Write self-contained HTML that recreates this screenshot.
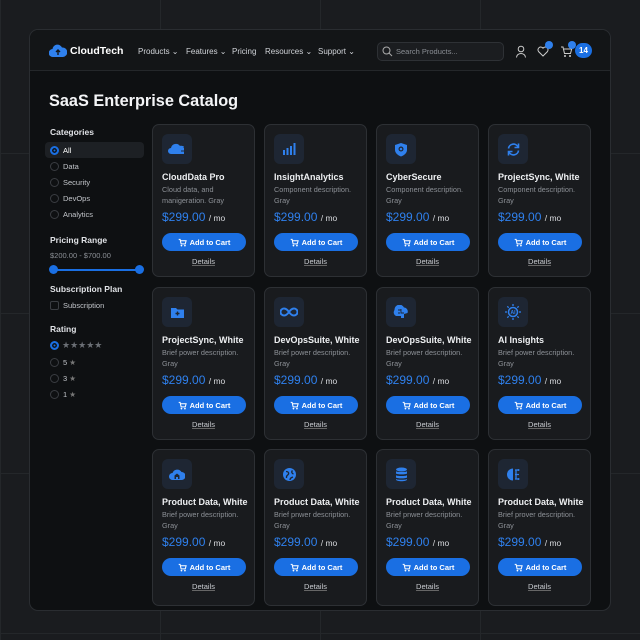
<!DOCTYPE html>
<html><head><meta charset="utf-8"><style>
*{margin:0;padding:0;box-sizing:border-box}
body{width:640px;height:640px;overflow:hidden;background:#1a1c1f;font-family:"Liberation Sans",sans-serif;color:#e8eaed;position:relative;
background-image:linear-gradient(#24272a 1px,transparent 1px),linear-gradient(90deg,#24272a 1px,transparent 1px);background-size:160px 160px;background-position:0 -7px}
.win{position:absolute;left:29px;top:29px;width:582px;height:582px;background:#0e1012;border:1px solid #2a2d31;border-radius:9px;overflow:hidden}
.hdr{position:absolute;left:0;top:0;width:100%;height:41px;background:#131517;border-bottom:1px solid #24272a}
.abs{position:absolute}
.nav{font-size:8px;color:#d0d3d8;top:17px}
.card{position:absolute;width:103px;background:#191b1e;border:1px solid #2d3034;border-radius:7px}
.ic{position:absolute;left:9px;top:9px;width:30px;height:30px;border-radius:6px;background:#1e2633;display:flex;align-items:center;justify-content:center}
.t{position:absolute;left:9px;top:47px;font-size:9px;font-weight:bold;color:#eef0f2;white-space:nowrap}
.d{position:absolute;left:9px;top:60px;font-size:7.3px;line-height:10.5px;color:#8c9096;width:90px}
.p{position:absolute;left:9px;top:85px;font-size:12px;color:#2f80ed;white-space:nowrap}
.p span{font-size:8.5px;color:#d8dade}
.b{position:absolute;left:9px;top:108px;width:84px;height:18px;border-radius:9px;background:#1a6fe3;color:#fff;font-size:7.5px;font-weight:bold;display:flex;align-items:center;justify-content:center;gap:3px}
.dt{position:absolute;left:0;width:100%;text-align:center;top:132px;font-size:7.5px;color:#c9ccd1;text-decoration:underline;text-decoration-color:#666}
.sb{position:absolute;font-size:8px;color:#e0e2e6}
.lbl{font-weight:bold;font-size:8.5px}
.rad{position:absolute;width:9px;height:9px;border-radius:50%;border:1px solid #3a3d42}
.it{position:absolute;font-size:7.5px;color:#c2c5ca}
</style></head><body>
<div class="win">
 <div class="hdr">
  <svg class="abs" style="left:19px;top:14px" width="18" height="14" viewBox="0 0 18 14"><path d="M4 13a4 4 0 0 1-.5-8A5 5 0 0 1 13 3.5 4.5 4.5 0 0 1 14 13z" fill="#2f80ed"/><path d="M9 11V6M7 8l2-2 2 2" stroke="#131517" stroke-width="1.4" fill="none"/></svg>
  <div class="abs" style="left:40px;top:15px;font-size:10.5px;font-weight:bold;color:#fff">CloudTech</div>
  <div class="abs nav" style="left:108px">Products ⌄</div>
  <div class="abs nav" style="left:156px">Features ⌄</div>
  <div class="abs nav" style="left:202px">Pricing</div>
  <div class="abs nav" style="left:235px">Resources ⌄</div>
  <div class="abs nav" style="left:288px">Support ⌄</div>
  <div class="abs" style="left:347px;top:12px;width:127px;height:19px;border:1px solid #2e3135;border-radius:5px;background:#1b1d20"></div>
  <svg class="abs" style="left:352px;top:16px" width="11" height="11" viewBox="0 0 11 11"><circle cx="4.5" cy="4.5" r="3.5" stroke="#aaa" fill="none"/><path d="M7 7l3 3" stroke="#aaa"/></svg>
  <div class="abs" style="left:366px;top:17px;font-size:7.5px;color:#8a8e94">Search Products...</div>
  <svg class="abs" style="left:485px;top:15px" width="12" height="13" viewBox="0 0 12 13"><circle cx="6" cy="4" r="2.8" stroke="#ccc" fill="none"/><path d="M1.5 12.5a4.5 4 0 0 1 9 0" stroke="#ccc" fill="none"/></svg>
  <svg class="abs" style="left:507px;top:16px" width="12" height="11" viewBox="0 0 12 11"><path d="M6 10L1.5 5.5A2.6 2.6 0 0 1 6 2.2 2.6 2.6 0 0 1 10.5 5.5z" stroke="#ccc" fill="none"/></svg>
  <div class="abs" style="left:515px;top:11px;width:8px;height:8px;border-radius:50%;background:#2f80ed"></div>
  <svg class="abs" style="left:530px;top:15px" width="13" height="13" viewBox="0 0 13 13"><path d="M1 2h2l1.5 6.5h6l1.2-4.5H4" stroke="#ccc" fill="none"/><circle cx="5" cy="11" r="1" fill="#ccc"/><circle cx="10" cy="11" r="1" fill="#ccc"/></svg>
  <div class="abs" style="left:538px;top:11px;width:8px;height:8px;border-radius:50%;background:#2f80ed"></div>
  <div class="abs" style="left:545px;top:13px;width:17px;height:15px;border-radius:8px;background:#1a6fe3;font-size:8px;font-weight:bold;color:#fff;text-align:center;line-height:15px">14</div>
 </div>
 <div class="abs" style="left:19px;top:62px;font-size:16.3px;font-weight:bold;color:#f4f5f7">SaaS Enterprise Catalog</div>
 <div class="sb lbl" style="left:20px;top:97px">Categories</div>
 <div class="abs" style="left:15px;top:112px;width:99px;height:16px;border-radius:4px;background:#1d2024"></div>
 <div class="rad" style="left:20px;top:116px;border:2px solid #1a6fe3;background:#1a6fe3;box-shadow:inset 0 0 0 1.5px #0e1012"></div><div class="it" style="left:33px;top:116px;color:#fff">All</div>
 <div class="rad" style="left:20px;top:132px"></div><div class="it" style="left:33px;top:132px">Data</div>
 <div class="rad" style="left:20px;top:148px"></div><div class="it" style="left:33px;top:148px">Security</div>
 <div class="rad" style="left:20px;top:164px"></div><div class="it" style="left:33px;top:164px">DevOps</div>
 <div class="rad" style="left:20px;top:180px"></div><div class="it" style="left:33px;top:180px">Analytics</div>
 <div class="sb lbl" style="left:20px;top:205px">Pricing Range</div>
 <div class="it" style="left:20px;top:221px;color:#8c9096">$200.00 - $700.00</div>
 <div class="abs" style="left:24px;top:239px;width:86px;height:2px;background:#1a6fe3"></div>
 <div class="abs" style="left:19px;top:235px;width:9px;height:9px;border-radius:50%;background:#1a6fe3"></div>
 <div class="abs" style="left:105px;top:235px;width:9px;height:9px;border-radius:50%;background:#1a6fe3"></div>
 <div class="sb lbl" style="left:20px;top:254px">Subscription Plan</div>
 <div class="abs" style="left:20px;top:271px;width:9px;height:9px;border:1px solid #3a3d42;border-radius:2px"></div><div class="it" style="left:33px;top:271px">Subscription</div>
 <div class="sb lbl" style="left:20px;top:294px">Rating</div>
 <div class="rad" style="left:20px;top:311px;border:2px solid #1a6fe3;background:#1a6fe3;box-shadow:inset 0 0 0 1.5px #0e1012"></div><div class="it" style="left:32px;top:310px;color:#6b6f75;font-size:9px">★★★★★</div>
 <div class="rad" style="left:20px;top:328px"></div><div class="it" style="left:33px;top:328px">5 <span style="color:#777">★</span></div>
 <div class="rad" style="left:20px;top:344px"></div><div class="it" style="left:33px;top:344px">3 <span style="color:#777">★</span></div>
 <div class="rad" style="left:20px;top:360px"></div><div class="it" style="left:33px;top:360px">1 <span style="color:#777">★</span></div>
 <div id="grid"></div>
</div>
<script>
var B='#2f80ed';
var icons=[
'<svg width="18" height="14" viewBox="0 0 18 14"><path d="M3 12a3 3 0 0 1 0-6 5 5 0 0 1 9-2h1v8z" fill="'+B+'"/><ellipse cx="13" cy="5" rx="3" ry="1.3" fill="'+B+'"/><rect x="10" y="6" width="6" height="2.5" fill="'+B+'"/><rect x="10" y="9.5" width="6" height="2.5" fill="'+B+'"/></svg>',
'<svg width="14" height="14" viewBox="0 0 14 14"><rect x="1" y="8" width="2" height="5" fill="'+B+'"/><rect x="4.5" y="6" width="2" height="7" fill="'+B+'"/><rect x="8" y="4" width="2" height="9" fill="'+B+'"/><rect x="11.5" y="1" width="2" height="12" fill="'+B+'"/></svg>',
'<svg width="14" height="15" viewBox="0 0 14 15"><path d="M7 1l6 2v5c0 3-3 5.5-6 6.5C4 13.5 1 11 1 8V3z" fill="'+B+'"/><circle cx="7" cy="7" r="2.5" fill="#1e2633"/><circle cx="7" cy="7" r="1.3" fill="'+B+'"/></svg>',
'<svg width="15" height="15" viewBox="0 0 15 15"><path d="M2.5 6.5A5 5 0 0 1 12 5M12.5 8.5A5 5 0 0 1 3 10" stroke="'+B+'" stroke-width="1.6" fill="none"/><path d="M12.5 1.5V5.5H8.5M2.5 13.5V9.5H6.5" stroke="'+B+'" stroke-width="1.6" fill="none"/></svg>',
'<svg width="15" height="13" viewBox="0 0 15 13"><path d="M1 2h5l1.5 1.5H14V12H1z" fill="'+B+'"/><path d="M7.5 5.5v4M5.5 7.5h4" stroke="#1e2633" stroke-width="1.4"/></svg>',
'<svg width="18" height="10" viewBox="0 0 18 10"><path d="M9 5C7 2 5 1.5 4 1.5a3.5 3.5 0 0 0 0 7C5 8.5 7 8 9 5s4-3.5 5-3.5a3.5 3.5 0 0 1 0 7c-1 0-3-.5-5-3.5" stroke="'+B+'" stroke-width="2" fill="none"/></svg>',
'<svg width="16" height="15" viewBox="0 0 16 15"><path d="M3 11a4 4 0 0 1-1.5-6A5 5 0 0 1 11 2.5 4 4 0 0 1 14.5 8L11 9v4H8v-2H4z" fill="'+B+'"/><path d="M5 5h3M8 4v4h3M5 8h2" stroke="#1e2633" stroke-width=".9" fill="none"/></svg>',
'<svg width="18" height="18" viewBox="0 0 18 18"><circle cx="9" cy="9" r="4.5" fill="none" stroke="'+B+'" stroke-width="1.5"/><text x="9" y="11" font-size="5" font-weight="bold" text-anchor="middle" fill="'+B+'" font-family="Liberation Sans">AI</text><path d="M9 1v2M9 15v2M1 9h2M15 9h2M3.3 3.3l1.4 1.4M13.3 13.3l1.4 1.4M3.3 14.7l1.4-1.4M13.3 4.7l1.4-1.4" stroke="'+B+'" stroke-width="1.3"/></svg>',
'<svg width="16" height="14" viewBox="0 0 16 14"><path d="M3.5 13a3.5 3.5 0 0 1 0-7A5 5 0 0 1 12.5 5a4 4 0 0 1 0 8z" fill="'+B+'"/><path d="M5.5 12V8.5L8 6.5l2.5 2V12H9V10H7v2z" fill="#1e2633"/></svg>',
'<svg width="15" height="15" viewBox="0 0 15 15"><circle cx="7.5" cy="7.5" r="6.5" fill="'+B+'"/><path d="M4 4.5c2 0 3 1 2.5 2.5S4 8 4.5 11M10.5 3.5C9 5 10 6.5 11.5 7M8 13c0-2 1.5-2.5 3-3" stroke="#1e2633" stroke-width="1.3" fill="none"/></svg>',
'<svg width="13" height="15" viewBox="0 0 13 15"><ellipse cx="6.5" cy="2.5" rx="5.5" ry="2" fill="'+B+'"/><path d="M1 4.2c1 1 10 1 11 0V6.5c-1 1.2-10 1.2-11 0zM1 8.2c1 1 10 1 11 0v2.3c-1 1.2-10 1.2-11 0zM1 12c1 1 10 1 11 0v.7c-1 2-10 2-11 0z" fill="'+B+'"/></svg>',
'<svg width="15" height="15" viewBox="0 0 15 15"><path d="M7 1.5A6 6 0 0 0 7 13.5z" fill="'+B+'"/><path d="M9 3h3M9 7.5h4M9 12h3M10 3v9" stroke="'+B+'" stroke-width="1.3"/><circle cx="12.5" cy="3" r="1" fill="'+B+'"/><circle cx="12.5" cy="12" r="1" fill="'+B+'"/></svg>'];
var titles=["CloudData Pro","InsightAnalytics","CyberSecure","ProjectSync, White","ProjectSync, White","DevOpsSuite, White","DevOpsSuite, White","AI Insights","Product Data, White","Product Data, White","Product Data, White","Product Data, White"];
var descs=["Cloud data, and manigeration. Gray","Component description. Gray","Component description. Gray","Component description. Gray","Brief power description. Gray","Brief power description. Gray","Brief power description. Gray","Brief power description. Gray","Brief power description. Gray","Brief pnwer description. Gray","Brief pnwer description. Gray","Brief prover description. Gray"];
var cart='<svg width="9" height="9" viewBox="0 0 13 13"><path d="M1 2h2l1.5 6.5h6l1.2-4.5H4" stroke="#fff" stroke-width="1.5" fill="none"/><circle cx="5" cy="11" r="1.2" fill="#fff"/><circle cx="10" cy="11" r="1.2" fill="#fff"/></svg>';
var h='',xs=[122,234,346,458],ys=[94,257,419],hs=[153,153,157];
for(var i=0;i<12;i++){var r=Math.floor(i/4),c=i%4;
h+='<div class="card" style="left:'+xs[c]+'px;top:'+ys[r]+'px;height:'+hs[r]+'px"><div class="ic">'+icons[i]+'</div><div class="t">'+titles[i]+'</div><div class="d">'+descs[i]+'</div><div class="p">$299.00 <span>/ mo</span></div><div class="b">'+cart+'Add to Cart</div><div class="dt">Details</div></div>';}
document.getElementById('grid').innerHTML=h;
</script>
</body></html>
